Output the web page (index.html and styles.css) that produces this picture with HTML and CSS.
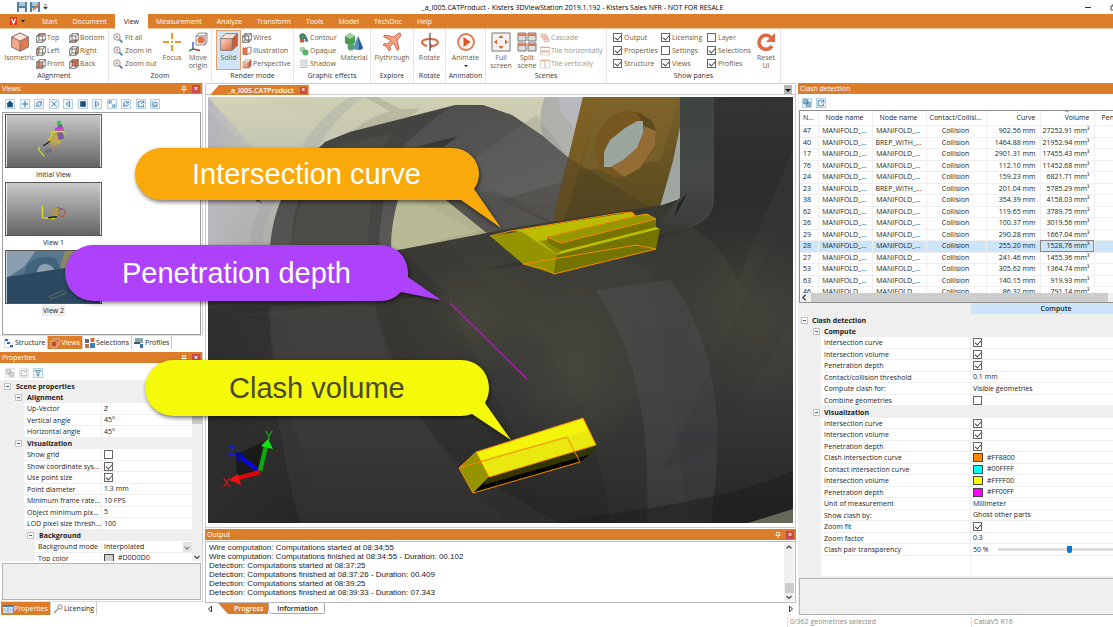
FILE: index.html
```html
<!DOCTYPE html>
<html lang="en">
<head>
<meta charset="utf-8">
<title>_a_I005.CATProduct - Kisters 3DViewStation</title>
<link rel="stylesheet" href="styles.css">
</head>
<body>
<svg class="defs" aria-hidden="true">
  <defs>
    <linearGradient id="gBox" x1="0" y1="0" x2="1" y2="1"><stop offset="0" stop-color="#fbd9cb"/><stop offset="1" stop-color="#e2673c"/></linearGradient>
    <linearGradient id="gThumb" x1="0" y1="0" x2="0" y2="1"><stop offset="0" stop-color="#c9c9c9"/><stop offset="1" stop-color="#646464"/></linearGradient>
    <symbol id="cube" viewBox="0 0 24 24"><path d="M12 1 22 6 12 11 2 6z" fill="#fbe0d4"/><path d="M2 6v12l10 5V11z" fill="#f5a788"/><path d="M22 6v12l-10 5V11z" fill="#e9784f"/><path d="M12 1 22 6v12l-10 5-10-5V6zM2 6l10 5 10-5M12 11v12" fill="none" stroke="#7c6a64" stroke-width="1.2"/></symbol>
    <symbol id="solid" viewBox="0 0 24 24"><path d="M2 8h14v14H2z" fill="url(#gBox)"/><path d="M2 8 8 2h14l-6 6z" fill="#fbe0d4"/><path d="M16 8l6-6v14l-6 6z" fill="#d9552a"/><path d="M2 8h14v14H2zM2 8l6-6h14v14l-6 6M16 8l6-6" fill="none" stroke="#7c6a64" stroke-width="1"/></symbol>
    <symbol id="wire" viewBox="0 0 10 10"><path d="M.7 3h6v6.300h-6zM.7 3 3 .7h6.300V7L6.700 9.300M6.700 3 9.300.7M3 .7V7h6.300M3 7 .7 9.300" fill="none" stroke="#555" stroke-width=".8"/></symbol>
    <symbol id="top" viewBox="0 0 10 10"><path d="M.7 3 3 .7h6.300L6.700 3z" fill="#f09a78"/><use href="#wire"/></symbol>
    <symbol id="bottom" viewBox="0 0 10 10"><path d="M.7 9.300 3 7h6.300L6.700 9.300z" fill="#f09a78"/><use href="#wire"/></symbol>
    <symbol id="left" viewBox="0 0 10 10"><path d="M.7 3 3 .7V7L.7 9.300z" fill="#f09a78"/><use href="#wire"/></symbol>
    <symbol id="right" viewBox="0 0 10 10"><path d="M6.700 3 9.300.7V7L6.700 9.300z" fill="#f09a78"/><use href="#wire"/></symbol>
    <symbol id="front" viewBox="0 0 10 10"><path d="M.7 3h6v6.300h-6z" fill="#f09a78"/><use href="#wire"/></symbol>
    <symbol id="back" viewBox="0 0 10 10"><path d="M3 .7h6.300V7H3z" fill="#ea7c54"/><use href="#wire"/></symbol>
    <symbol id="mag" viewBox="0 0 10 10"><path d="m6.300 6.300 3 3" stroke="#4a7fb0" stroke-width="1.800"/><circle cx="4" cy="4" r="3.200" fill="#eef2f5" stroke="#8b8f94" stroke-width=".9"/><circle cx="4" cy="4" r="1.300" fill="#eba27c"/></symbol>
    <symbol id="pin" viewBox="0 0 6 8"><path d="M1.500 1.500h3v3h-3zM.5 4.500h5M3 4.500v2.500" fill="none" stroke="#fff" stroke-width=".8"/></symbol>
    <symbol id="minus" viewBox="0 0 7 7"><path d="M.5.5h6v6h-6z" fill="#fff" stroke="#aaa" stroke-width=".7"/><path d="M2 3.500h3" stroke="#4a5a80"/></symbol>
    <symbol id="copy" viewBox="0 0 10 10"><path d="M1 1h5v5H1zM4 4h5v5H4z" fill="#a8cbe2" stroke="#2f6a94" stroke-width=".9"/></symbol>
    <symbol id="export" viewBox="0 0 10 10"><path d="M5 2H1.500v6.500H8V5.500M5 5l3-3M5.700 1.500H8.500v2.800" fill="none" stroke="#2f6a94" stroke-width="1"/></symbol>
    <symbol id="cycle" viewBox="0 0 10 10"><path d="M8 5a3 3 0 0 1-5.500 1.500M2 5a3 3 0 0 1 5.500-1.500M8 1.500v2.300H5.600M2 8.500V6.200h2.400" fill="none" stroke="#2f6a94" stroke-width="1"/></symbol>
  </defs>
</svg>

<header class="titlebar">
  <div class="quick">
    <svg viewBox="0 0 10 10"><path d="M0 0h10v10H0z" fill="#5b7f99"/><path d="M2 0h6v4H2z" fill="#a9c9de"/><path d="M2 6h6v4H2z" fill="#eaf1f5"/></svg>
    <svg viewBox="0 0 10 10"><path d="M0 0h10v10H0z" fill="#4f86a8"/><path d="M2 0h6v4H2z" fill="#a9c9de"/><path d="M2 6h6v4H2z" fill="#eaf1f5"/><path d="m3 8 6-6" stroke="#e07a3c" stroke-width="1.800"/></svg>
    <svg class="caret" viewBox="0 0 5 6"><path d="M1 .8h3M.6 3h3.800L2.500 5.300z" fill="#333" stroke="#333" stroke-width=".6"/></svg>
  </div>
  <h1>_a_I005.CATProduct - Kisters 3DViewStation 2019.1.192 - Kisters Sales NFR - NOT FOR RESALE</h1>
  <div class="winbtns"><button aria-label="Minimize"><svg viewBox="0 0 8 8"><path d="M1 4.500h6" stroke="#333"/></svg></button><button aria-label="Restore"><svg viewBox="0 0 8 8"><path d="M1 3h4.500v4H1zM3 3V1h4.500v4.500h-2" fill="none" stroke="#333" stroke-width=".9"/></svg></button></div>
</header>

<nav class="tabs">
  <button class="app" aria-label="Application menu"><svg viewBox="0 0 16 8"><path d="M0 0h7v8H0z" fill="#d9381e"/><path d="m1.500 1.500 2 5 2-5" fill="none" stroke="#fff" stroke-width="1.200"/><path d="M11 3h4l-2 2.500z" fill="#222"/></svg></button>
  <button>Start</button><button>Document</button><button class="on">View</button><button>Measurement</button><button>Analyze</button><button>Transform</button><button>Tools</button><button>Model</button><button>TechDoc</button><button>Help</button>
</nav>

<section class="ribbon">
  <div class="group g-align">
    <div class="body">
      <button class="big"><svg><use href="#cube"/></svg>Isometric</button>
      <div class="stack"><button><svg><use href="#top"/></svg>Top</button><button><svg><use href="#left"/></svg>Left</button><button><svg><use href="#front"/></svg>Front</button></div>
      <div class="stack"><button><svg><use href="#bottom"/></svg>Bottom</button><button><svg><use href="#right"/></svg>Right</button><button><svg><use href="#back"/></svg>Back</button></div>
    </div><h2>Alignment</h2>
  </div>
  <div class="group g-zoom">
    <div class="body">
      <div class="stack"><button><svg><use href="#mag"/></svg>Fit all</button><button><svg><use href="#mag"/></svg>Zoom in</button><button><svg><use href="#mag"/></svg>Zoom out</button></div>
      <button class="big"><svg viewBox="0 0 20 20"><path d="M10 1v6M10 13v6M1 10h6M13 10h6M9 10h2" stroke="#f4942c" stroke-width="2"/></svg>Focus</button>
      <button class="big"><svg viewBox="0 0 20 20"><path d="M8 4h9v9H8zM8 4l3-3h8v9l-2 3M17 4l2-3" fill="#f6f1ee" stroke="#777" stroke-width=".8"/><circle cx="13" cy="8" r="3.500" fill="#e4734a"/><path d="M5 17V10" stroke="#2b50c8" stroke-width="1.300"/><path d="m5 17-4 2" stroke="#2d9a3c" stroke-width="1.500"/><path d="m5 17 7 1.500" stroke="#cc2f25" stroke-width="1.500"/></svg>Move<br>origin</button>
    </div><h2>Zoom</h2>
  </div>
  <div class="group g-render">
    <div class="body">
      <button class="big sel"><svg><use href="#solid"/></svg>Solid</button>
      <div class="stack"><button><svg viewBox="0 0 10 10"><use href="#wire"/><path d="m.7 3 6 6.300M3 .7 6.700 3" stroke="#555" stroke-width=".7"/></svg>Wires</button><button><svg viewBox="0 0 10 10"><path d="M1 2h4v6.500H1z" fill="#e9784f"/><path d="M1 2h4v6.500H1zM5 2l2-1h2v6L5 8.500" fill="none" stroke="#b55432" stroke-width=".8"/></svg>Illustration</button><button><svg><use href="#solid"/></svg>Perspective</button></div>
    </div><h2>Render mode</h2>
  </div>
  <div class="group g-gfx">
    <div class="body">
      <div class="stack"><button><svg viewBox="0 0 10 10"><circle cx="3.500" cy="3.500" r="2.800" fill="#3f9a62" stroke="#222" stroke-width=".6"/><path d="M7 2 9.500 8.500h-4z" fill="#3b76b8"/><path d="M1 6h4v3.500H1z" fill="#d7572c"/></svg>Contour</button><button><svg viewBox="0 0 10 10"><circle cx="3.500" cy="3.500" r="2.800" fill="#9fd0a0"/><circle cx="6.500" cy="6.500" r="3" fill="#5fae6b"/></svg>Opaque</button><button><svg viewBox="0 0 10 10"><path d="M2 1h6v6H2z" fill="#e3e3e3" stroke="#bbb" stroke-width=".6"/><path d="M1 8.500h7l1.500-2" stroke="#bbb" fill="none"/></svg>Shadow</button></div>
      <button class="big"><svg viewBox="0 0 20 20"><path d="M1 4 6 1l5 3v7l-5 3-5-3z" fill="#4f9a55"/><path d="m1 4 5 3 5-3-5-3z" fill="#9fd39b"/><path d="m14 4 5 12c-2 2.500-8 2.500-10 0z" fill="#5a90c4"/><path d="m14 4 1 14c2 0 3-1 4-2z" fill="#2d5f96"/><circle cx="7" cy="15" r="3.500" fill="#57a06b"/></svg>Material</button>
    </div><h2>Graphic effects</h2>
  </div>
  <div class="group g-fly"><div class="body"><button class="big"><svg viewBox="0 0 20 20"><path d="M18.500 1.500c-1.400-1-3 0-4 1L12 5 3 3 1.500 4.500 9 8.500 5.500 12l-3-.500L1 13l4 2 2 4 1.500-1.500-.5-3L11.500 11l4 7.500L17 17l-2-9 2.500-2.500c1-1 2-2.700 1-4z" fill="#f2a182" stroke="#cf5a35" stroke-width=".9"/></svg>Flythrough</button></div><h2>Explore</h2></div>
  <div class="group g-rot"><div class="body"><button class="big"><svg viewBox="0 0 20 20"><path d="M7 14C-1 12 1 7 10 7s11 5 3 7" fill="none" stroke="#dd6540" stroke-width="2"/><path d="m10 11 4 3-4 3z" fill="#dd6540"/><path d="M10 1v18" stroke="#555" stroke-width="1.300"/></svg>Rotate</button></div><h2>Rotate</h2></div>
  <div class="group g-anim"><div class="body"><button class="big"><svg viewBox="0 0 20 20"><circle cx="10" cy="10" r="8" fill="#fdf4ef" stroke="#dd7a55" stroke-width="1.800"/><path d="m7.500 5 7 5-7 5z" fill="#dd5527"/></svg>Animate<i class="drop"></i></button></div><h2>Animation</h2></div>
  <div class="group g-scene">
    <div class="body">
      <button class="big"><svg viewBox="0 0 20 20"><path d="M1 1h18v18H1z" fill="#f5f2f1" stroke="#777"/><path d="m10 3 2.500 3h-5zM10 17l2.500-3h-5zM3 10l3-2.500v5zM17 10l-3-2.500v5z" fill="#d9602f"/></svg>Full<br>screen</button>
      <button class="big"><svg viewBox="0 0 20 20"><path d="M1 1h8v8H1zM11 1h8v8h-8zM1 11h8v8H1zM11 11h8v8h-8z" fill="#dfdcda" stroke="#777"/><path d="M1 3h8M11 3h8M1 13h8M11 13h8" stroke="#e07a55" stroke-width="2"/></svg>Split<br>scene</button>
      <div class="stack dim"><button><svg viewBox="0 0 10 10"><path d="M1 1h5v3H1zM2.500 3h5v3h-5zM4 5.500h5v3H4z" fill="#f3e3dd" stroke="#dcaea0" stroke-width=".8"/></svg>Cascade</button><button><svg viewBox="0 0 10 10"><path d="M.5 1h9v3.500h-9zM.5 5.500h9V9h-9z" fill="#fff" stroke="#d3bdb6" stroke-width=".7"/><path d="M.5 1.500h9M.5 6h9" stroke="#e9a58e"/></svg>Tile horizontally</button><button><svg viewBox="0 0 10 10"><path d="M.5 1H5v8H.5zM5 1h4.500v8H5z" fill="#fff" stroke="#d3bdb6" stroke-width=".7"/><path d="M.5 1.500h9" stroke="#e9a58e"/></svg>Tile vertically</button></div>
    </div><h2>Scenes</h2>
  </div>
  <div class="group g-panes">
    <div class="body">
      <div class="stack"><label><input type="checkbox" checked>Output</label><label><input type="checkbox" checked>Properties</label><label><input type="checkbox" checked>Structure</label></div>
      <div class="stack"><label><input type="checkbox" checked>Licensing</label><label><input type="checkbox">Settings</label><label><input type="checkbox" checked>Views</label></div>
      <div class="stack"><label><input type="checkbox">Layer</label><label><input type="checkbox" checked>Selections</label><label><input type="checkbox" checked>Profiles</label></div>
      <button class="big"><svg viewBox="0 0 20 20"><path d="M15.500 6A7 7 0 1 0 16 14" fill="none" stroke="#dd6a45" stroke-width="3.500"/><path d="M19 1v9h-9z" fill="#dd6a45"/></svg>Reset<br>UI</button>
    </div><h2>Show panes</h2>
  </div>
</section>

<main class="work">
  <aside class="side">
    <section class="pane views">
      <header class="bar"><h3>Views</h3><button aria-label="Pin"><svg><use href="#pin"/></svg></button><button class="close" aria-label="Close">×</button></header>
      <div class="tools spread">
        <button aria-label="Home"><svg viewBox="0 0 10 10"><path d="M5 .5 9.500 5H8.500v4h-7V5h-1z" fill="#1d4f7c"/></svg></button>
        <button aria-label="Add"><svg viewBox="0 0 10 10"><path d="M5 1v8M1 5h8" stroke="#2f6a94" stroke-width="1.200"/></svg></button>
        <button aria-label="Refresh"><svg><use href="#cycle"/></svg></button>
        <button aria-label="Delete"><svg viewBox="0 0 10 10"><path d="m1.500 1.500 7 7M8.500 1.500l-7 7" stroke="#2f6a94"/></svg></button>
        <button aria-label="Previous"><svg viewBox="0 0 10 10"><path d="M7 1.500v7L2.500 5z" fill="none" stroke="#2f6a94"/></svg></button>
        <button aria-label="Stop"><svg viewBox="0 0 10 10"><path d="M1.500 1.500h7v7h-7z" fill="#1d4f7c"/></svg></button>
        <button aria-label="Next"><svg viewBox="0 0 10 10"><path d="M3 1.500v7L7.500 5z" fill="none" stroke="#2f6a94"/></svg></button>
        <button aria-label="Fit"><svg viewBox="0 0 10 10"><path d="M1.500 5V1.500H5M8.500 5v3.500H5M2 2l2.500 2.500M8 8 5.500 5.500" fill="none" stroke="#2f6a94"/></svg></button>
        <button aria-label="Update"><svg><use href="#cycle"/></svg></button>
        <button aria-label="Export"><svg><use href="#export"/></svg></button>
        <button aria-label="Settings"><svg viewBox="0 0 10 10"><circle cx="5.500" cy="5" r="2.300" fill="none" stroke="#2f6a94"/><path d="M1.500 1.500v7h7" fill="none" stroke="#2f6a94" stroke-width=".8"/></svg></button>
      </div>
      <div class="list">
        <figure><svg viewBox="0 0 97 54"><path d="M0 0h97v54H0z" fill="url(#gThumb)"/><path d="M43 27l6-10 7-1 4 5-5 9-8 2z" fill="#b9a94e"/><path d="M53 9h4l2 6v10l-5 1-2-8z" fill="#7c5aa0"/><path d="M50 13h8v3h-8z" fill="#d53bd8"/><path d="M52 6h4v4h-4z" fill="#2fc95a"/><path d="M45 18l13-1 2 3" fill="none" stroke="#d8d820" stroke-width="1.500"/><path d="M34 33l-1 3 6 7M47 20l-4 7" fill="none" stroke="#d8d820" stroke-width="1.200"/><path d="M38 32l7-5" stroke="#2a2a30" stroke-width="1.500"/><path d="M39 37l6-3 2 4-5 2z" fill="#6d6f80"/><path d="M47 28l3 6-3 4" fill="none" stroke="#c77a6a"/></svg><figcaption>Initial View</figcaption></figure>
        <figure><svg viewBox="0 0 97 54"><path d="M0 0h97v54H0z" fill="url(#gThumb)"/><path d="M37 24v12l13 1" fill="none" stroke="#dcdc20" stroke-width="1.500"/><circle cx="51" cy="30" r="5" fill="#a89a55"/><path d="M43 36l9-1" stroke="#222" stroke-width="1.500"/><path d="M55 27l6 1-2 7-5-1z" fill="none" stroke="#b5543c"/><path d="M52 25l6 2" stroke="#7b4b9e"/></svg><figcaption>View 1</figcaption></figure>
        <figure class="picked"><svg viewBox="0 0 97 54"><path d="M0 0h97v54H0z" fill="#57778f"/><path d="M0 0h30L18 16 0 28z" fill="#8aa0b0"/><path d="M57 0h40v16L70 12z" fill="#60758a"/><path d="M19 20C22 8 38 4 50 7l8 14H47C45 9 31 12 31 24H18z" fill="#41647d"/><path d="M31 23C32 12 44 10 50 20z" fill="#8da1ac"/><path d="M60 0h12L65 22l-10-2z" fill="#8b8a62"/><path d="M0 27 70 16l27 8v30H0z" fill="#2b4a62"/><path d="M44 47l15-6 2 3-15 6z" fill="none" stroke="#7b755a" stroke-width=".7"/></svg><figcaption>View 2</figcaption></figure>
      </div>
    </section>
    <div class="docktabs">
      <button><svg viewBox="0 0 10 10"><path d="M1 1h3v2H1zM3 4h3v2H3zM6 7h3v2H6z" fill="#2f6ab0"/><path d="M.3.3v9.400h9.400" fill="none" stroke="#9bb" stroke-width=".6"/></svg>Structure</button><button class="on"><svg viewBox="0 0 10 10"><path d="M1 3h6v6H1zM3 1h6v6" fill="#c74f28" stroke="#fff" stroke-width=".6"/></svg>Views</button><button><svg viewBox="0 0 10 10"><path d="M0 1h4v4H0z" fill="#5a6a7a"/><path d="M5.500 0h4v4h-4zM0 6h4v4H0z" fill="#dd6a3c"/><path d="M5 5h5v5H5z" fill="#2e86c8"/></svg>Selections</button><button><svg viewBox="0 0 10 10"><path d="M1 0h8v5H1z" fill="#8aa"/><path d="M0 4h6v2H0z" fill="#456"/><path d="M6 6h3v4H6z" fill="#37b"/></svg>Profiles</button>
    </div>
    <section class="pane props">
      <header class="bar"><h3>Properties</h3><button aria-label="Pin"><svg><use href="#pin"/></svg></button><button class="close" aria-label="Close">×</button></header>
      <div class="tools"><button class="off" aria-label="Copy"><svg><use href="#copy"/></svg></button><button class="off" aria-label="Export"><svg><use href="#export"/></svg></button><button aria-label="Filter"><svg viewBox="0 0 10 10"><path d="M1.500 2h7L6 5v3.500H4V5z" fill="#d6ebf7" stroke="#2f6a94" stroke-width=".9"/></svg></button></div>
      <div class="scroller">
        <div class="sheet">
          <div class="sec s1"><button aria-label="Collapse"><svg><use href="#minus"/></svg></button>Scene properties</div>
          <div class="sec s2"><button aria-label="Collapse"><svg><use href="#minus"/></svg></button>Alignment</div>
          <div class="row"><span class="k">Up-Vector</span><span class="v">Z</span></div>
          <div class="row"><span class="k">Vertical angle</span><span class="v">45°</span></div>
          <div class="row"><span class="k">Horizontal angle</span><span class="v">45°</span></div>
          <div class="sec s2"><button aria-label="Collapse"><svg><use href="#minus"/></svg></button>Visualization</div>
          <div class="row"><label class="k" for="p1">Show grid</label><span class="v"><input type="checkbox" id="p1"></span></div>
          <div class="row"><label class="k" for="p2">Show coordinate sys...</label><span class="v"><input type="checkbox" id="p2" checked></span></div>
          <div class="row"><label class="k" for="p3">Use point size</label><span class="v"><input type="checkbox" id="p3" checked></span></div>
          <div class="row"><span class="k">Point diameter</span><span class="v">1.3 mm</span></div>
          <div class="row"><span class="k">Minimum frame rate...</span><span class="v">10 FPS</span></div>
          <div class="row"><span class="k">Object minimum pix...</span><span class="v">5</span></div>
          <div class="row"><span class="k">LOD pixel size thresh...</span><span class="v">100</span></div>
          <div class="sec s3"><button aria-label="Collapse"><svg><use href="#minus"/></svg></button>Background</div>
          <div class="row deep"><label class="k" for="bm">Background mode</label><span class="v"><select id="bm"><option>Interpolated</option></select></span></div>
          <div class="row deep"><span class="k">Top color</span><span class="v"><i class="chip grey"></i>#D0D0D0</span></div>
        </div>
        <div class="vbar"><span></span><svg viewBox="0 0 8 8"><path d="m1.500 3 2.500 2.500L6.500 3" fill="none" stroke="#444" stroke-width="1.200"/></svg></div>
      </div>
      <div class="note"></div>
    </section>
    <div class="docktabs low">
      <button class="on"><svg viewBox="0 0 10 10"><path d="M0 1h10v8H0z" fill="#dceaf6"/><path d="M0 1h10v2H0z" fill="#3e7cc0"/><path d="M5 3v6M0 5h10M0 7h10" stroke="#7aa6d4" stroke-width=".7"/></svg>Properties</button><button><svg viewBox="0 0 10 10"><path d="M1 9 6 4" stroke="#999" stroke-width="1.500"/><circle cx="7" cy="3" r="2.200" fill="#eee" stroke="#888" stroke-width=".9"/></svg>Licensing</button>
    </div>
  </aside>

  <section class="center">
    <div class="doctabs"><button class="doc">_a_I005.CATProduct<span class="x">×</span></button><button class="more" aria-label="Documents"><svg viewBox="0 0 8 8"><path d="M1 3h6L4 6z" fill="#111"/></svg></button></div>
    <div class="viewport">
      <svg class="scene" viewBox="208 97 585 426" preserveAspectRatio="xMidYMid slice" role="img" aria-label="3D model with clash geometry">
        <defs>
          <linearGradient id="sky" x1="0" y1="0" x2="0" y2="1"><stop offset="0" stop-color="#d0d1b2"/><stop offset=".2" stop-color="#b9b9ae"/><stop offset=".45" stop-color="#929290"/></linearGradient>
          <linearGradient id="lilac" x1="0" y1="0" x2="1" y2="0"><stop offset="0" stop-color="#b4b4ba"/><stop offset="1" stop-color="#b4b4ba" stop-opacity="0"/></linearGradient>
          <linearGradient id="ring" x1="0" y1="0" x2="1" y2="1"><stop offset="0" stop-color="#484846"/><stop offset="1" stop-color="#686765"/></linearGradient>
          <linearGradient id="body" gradientUnits="userSpaceOnUse" x1="0" y1="200" x2="0" y2="523"><stop offset="0" stop-color="#383833"/><stop offset=".3" stop-color="#3c3c37"/><stop offset=".6" stop-color="#383837"/><stop offset="1" stop-color="#262626"/></linearGradient>
          <linearGradient id="wall" gradientUnits="userSpaceOnUse" x1="0" y1="97" x2="0" y2="330"><stop offset="0" stop-color="#333"/><stop offset=".4" stop-color="#2c2c2c"/><stop offset="1" stop-color="#2c2c2c" stop-opacity="0"/></linearGradient>
          <linearGradient id="strip" gradientUnits="userSpaceOnUse" x1="0" y1="97" x2="0" y2="235"><stop offset="0" stop-color="#3e443f"/><stop offset=".6" stop-color="#454846"/><stop offset="1" stop-color="#3a3a38"/></linearGradient>
          <linearGradient id="brass" x1="0" y1="0" x2="0" y2="1"><stop offset="0" stop-color="#796026"/><stop offset="1" stop-color="#55481f"/></linearGradient>
          <radialGradient id="olive"><stop offset="0" stop-color="#505040" stop-opacity=".5"/><stop offset="1" stop-color="#505040" stop-opacity="0"/></radialGradient>
          <linearGradient id="shade" x1="0" y1="0" x2="1" y2="0"><stop offset="0" stop-color="#303030" stop-opacity=".8"/><stop offset="1" stop-color="#303030" stop-opacity="0"/></linearGradient>
        </defs>
        <path d="M208 97h585v426H208z" fill="url(#sky)"/>
        <path d="M208 97l80 90v60h-80z" fill="url(#lilac)"/>
        <path d="M208 97h50l95 45-80 100h-65v-40l70-30-70-60z" fill="#fff" opacity=".06"/>
        <path d="M302 145c15-22 32-38 48-48h14c-20 14-36 32-48 54zM250 244c4-30 14-50 24-64l10 8c-12 18-20 34-22 56z" fill="#9c9ca4" opacity=".28"/>
        <path d="M378 97l44 25-8 2-50-27zM360 125c20-14 44-18 60-16l-10 8-60 16z" fill="#a5a592" opacity=".5"/>
        <path d="M545 97h38l-15 60-25-22c-4-14-3-28 2-38z" fill="#b0b0ac"/>
        <path d="M558 97h25l-8 32-14-16z" fill="#b8b8bf"/>
        <path d="M270 246c2-20 6-34 11-46l20-36 24-22 25-10 105-27h28l29 10 31 21 27 23 40 32 80 30v60H270z" fill="url(#ring)"/>
        <path d="M325 142l25-10 105-26c-20 8-38 28-48 36-16 20-26 60-28 104h-88c2-30 8-60 34-104z" fill="#3e3e3c" opacity=".7"/>
        <path d="M292 246c2-30 12-64 40-100l60-12c-20 30-22 70-24 112z" fill="#57574d" opacity=".45"/>
        <path d="M416 147l42-11-14 11z" fill="#383836"/>
        <path d="M391 254c0-20 2-36 7-54h48l41 33-40 12-50 12z" fill="#b1b28e"/>
        <path d="M391 246c0-18 3-30 7-46h18l68 35-88 17z" fill="#bec09a" opacity=".55"/>
        <path d="M446 200l50-10 60 34-69 9z" fill="#50504e" opacity=".75"/>
        <path d="M466 165l70-50 34 44 30 26-60 20-60-15z" fill="#77767a" opacity=".2"/>
        <path d="M500 200l90-26 50 36-90 14z" fill="#45433d" opacity=".4"/>
        <path d="M660 97h24l-4 100-24 10z" fill="#9fa6a2"/>
        <path d="M583 97h103l-13 64-17 60-104 4z" fill="url(#brass)"/>
        <path d="M583 97h18l-38 128h-11z" fill="#856425" opacity=".55"/>
        <path d="M601 97h79l-20 64-80 10z" fill="#83672f" opacity=".5"/>
        <path d="M568 157l84 52 4 16H552z" fill="#483d24" opacity=".4"/>
        <path d="M594 148l4-16 12-15 16-7 15 3 12 9 3 14-6 19-16 17-18 6-16-9z" fill="#76571f"/>
        <path d="M611 167l12-7 14-12 6-15 1-12 12 9-1 15-15 23-16 9z" fill="#946c35"/>
        <path d="M637 112l15 9 4 10-12-5-4-8z" fill="#5c491f"/>
        <path d="M643 121h-6l-12 7-15 12-6 12v15h7l12-7 14-12 6-15z" fill="#9ba69d"/>
        <path d="M208 316l190-66 114-22 150-23 20-7 111-30v355H208z" fill="url(#body)"/>
        <path d="M713 97h80v250h-40c-8-60-24-100-62-120 16-4 22-14 22-26z" fill="url(#wall)"/>
        <path d="M680 97h34v104c-2 16-12 22-24 26l-30-4 20-26z" fill="url(#strip)"/>
        <path d="M713 110v90c0 12-8 20-22 26" fill="none" stroke="#4a4c4a" stroke-width=".8"/>
        <path d="M793 150v200l-60-60z" fill="#434341" opacity=".3"/>
        <path d="M208 260l200-5 40 40-240 22z" fill="#353532"/>
        <path d="M208 316h90v207h-90z" fill="url(#shade)"/>
        <path d="M440 240l90-20 120 50 40 253h-80c-10-110-60-190-170-283z" fill="#58584a" opacity=".1"/>
        <ellipse cx="475" cy="320" rx="80" ry="60" fill="url(#olive)"/>
        <ellipse cx="575" cy="365" rx="70" ry="90" fill="url(#olive)"/>
        <ellipse cx="755" cy="320" rx="70" ry="90" fill="url(#olive)"/>
        <path d="M595 290l76-10c26 36 40 80 44 120 6 44 0 90-4 123h-64c4-110-14-180-52-233z" fill="#5a5a60" opacity=".3"/>
        <path d="M208 308l60-1c4 40 12 90 30 130l30 86H208z" fill="#282828" opacity=".35"/>
        <path d="M270 306l104-6c10 56 34 120 94 170l90 53H300c-20-70-30-150-30-217z" fill="#555554" opacity=".2"/>
        <path d="M374 300l76 2c24 60 70 130 100 221h-40c-60-50-112-130-136-223z" fill="#1f1f22" opacity=".15"/>
        <path d="M688 192l-14 26 4-14z" fill="#1e211e"/>
        <path d="M480 270l80-18 120-22v4l-120 28-80 8z" fill="#2b2b28" opacity=".35"/>
        <path d="M560 523c80-16 160-20 233-52v38l-45 14z" fill="#1c1c1c" opacity=".5"/>
        <path d="M748 523l45-14v14z" fill="#686858"/>
        <path d="M793 200v120l-80 130-50 20 90-190z" fill="#2c2c2e" opacity=".15"/>
        <g stroke-linejoin="round">
          <path d="M490 236l33-5 34 24-3 19-31-10z" fill="#949400"/>
          <path d="M511 231l121-19 3 4 12-2 9 5v8l4 2-103 26-35-23z" fill="#bcbc00"/>
          <path d="M557 255l103-26-4 20-102 25z" fill="#747400"/>
          <path d="M539 241l8-1 14 11-4 3z" fill="#8a8a00"/>
          <path d="M547 237l100-23 9 5v8l-95 24-14-9z" fill="#757500"/>
          <path d="M547 237l100-23 9 5-95 24z" fill="#969600"/>
          <path d="M490 236l21-5 109-18 12-1 3 3M561 243l-14-6 88-21 12-2 9 5-95 24zM523 264l22 5 9 5 102-25-20-4-113 19" fill="none" stroke="#f58a00"/>
          <path d="M459 468l17-16 13 25-3 6-13 10z" fill="#949400"/>
          <path d="M489 477l107-32-6 9-10 8-107 31z" fill="#050500"/>
          <path d="M489 477l107-32-5 9-108 31z" fill="#353500"/>
          <path d="M476 452l107-34 13 27-107 32z" fill="#f5f50c"/>
          <path d="M483 459l106-29 7 15-107 32z" fill="#e9e910"/>
          <path d="M476 452l107-34 13 27-107 32zM476 452l-17 16 14 25 107-31-13-25-108 31" fill="none" stroke="#f58a00"/>
          <path d="M450 303l77 76" stroke="#c812c8" stroke-width="1.200"/>
        </g>
        <path d="M236 455l31-15-7 32-23 7z" fill="#151515" opacity=".8"/>
        <path d="M260 472l-20-15" stroke="#0a0ad8" stroke-width="4.500"/><path d="M235 452l9 1-7 10z" fill="#0a0a8c"/>
        <path d="M260 471l6-25" stroke="#0ba80b" stroke-width="4.500"/><path d="M268 439l5 10-12-3z" fill="#0be60b"/>
        <path d="M260 472l-22 6" stroke="#d10a0a" stroke-width="4.500"/><path d="M229 480l9-6 3 11z" fill="#f01010"/>
        <g class="axis"><text x="222" y="487" fill="#d81414">X</text><text x="228" y="455" fill="#2020d0">Z</text><text x="265" y="440" fill="#18b018">Y</text></g>
        <path d="M257 194v8l2-2 2 3" fill="none" stroke="#111" stroke-width=".8"/>
      </svg>
    </div>
    <section class="pane output">
      <header class="bar"><h3>Output</h3><button aria-label="Pin"><svg><use href="#pin"/></svg></button><button class="close" aria-label="Close">×</button></header>
      <div class="log"><ul><li>Wire computation: Computations started at 08:34:55</li><li>Wire computation: Computations finished at 08:34:55 - Duration: 00.102</li><li>Detection: Computations started at 08:37:25</li><li>Detection: Computations finished at 08:37:26 - Duration: 00.409</li><li>Detection: Computations started at 08:39:25</li><li>Detection: Computations finished at 08:39:33 - Duration: 07.343</li></ul>
        <div class="vbar"><svg viewBox="0 0 8 8"><path d="m1.500 5.500 2.500-2.500 2.500 2.500" fill="none" stroke="#444" stroke-width="1.200"/></svg><span></span><svg viewBox="0 0 8 8"><path d="m1.500 3 2.500 2.500L6.500 3" fill="none" stroke="#444" stroke-width="1.200"/></svg></div></div>
      <div class="outtabs"><button class="arr" aria-label="Scroll left"><svg viewBox="0 0 8 8"><path d="M5.500 1v6L2.500 4z" fill="none" stroke="#222" stroke-width=".9"/></svg></button><button class="on">Progress</button><button class="info">Information</button><button class="arr end" aria-label="Scroll right"><svg viewBox="0 0 8 8"><path d="M2.500 1v6l3-3z" fill="none" stroke="#222" stroke-width=".9"/></svg></button></div>
    </section>
  </section>

  <aside class="clash">
    <header class="bar"><h3>Clash detection</h3></header>
    <div class="tools"><button aria-label="Copy"><svg><use href="#copy"/></svg></button><button aria-label="Export"><svg><use href="#export"/></svg></button></div>
    <div class="grid">
      <div class="clip">
      <table>
        <colgroup><col class="c0"><col class="c1"><col class="c1"><col class="c3"><col class="c4"><col class="c4"><col class="c4"></colgroup>
        <thead><tr><th>N...</th><th>Node name</th><th>Node name</th><th>Contact/Collisi...</th><th>Curve</th><th class="sorted">Volume</th><th>Penetration</th></tr></thead>
        <tbody>
          <tr><td>47</td><td>MANIFOLD_...</td><td>MANIFOLD_...</td><td>Collision</td><td>902.56 mm</td><td>27252.91 mm³</td><td></td></tr>
          <tr><td>40</td><td>MANIFOLD_...</td><td>BREP_WITH_...</td><td>Collision</td><td>1464.88 mm</td><td>21952.94 mm³</td><td></td></tr>
          <tr><td>17</td><td>MANIFOLD_...</td><td>MANIFOLD_...</td><td>Collision</td><td>2901.31 mm</td><td>17455.43 mm³</td><td></td></tr>
          <tr><td>76</td><td>MANIFOLD_...</td><td>MANIFOLD_...</td><td>Collision</td><td>112.10 mm</td><td>11452.68 mm³</td><td></td></tr>
          <tr><td>24</td><td>MANIFOLD_...</td><td>MANIFOLD_...</td><td>Collision</td><td>159.23 mm</td><td>6821.71 mm³</td><td></td></tr>
          <tr><td>23</td><td>MANIFOLD_...</td><td>BREP_WITH_...</td><td>Collision</td><td>201.04 mm</td><td>5785.29 mm³</td><td></td></tr>
          <tr><td>38</td><td>MANIFOLD_...</td><td>MANIFOLD_...</td><td>Collision</td><td>354.39 mm</td><td>4158.03 mm³</td><td></td></tr>
          <tr><td>62</td><td>MANIFOLD_...</td><td>MANIFOLD_...</td><td>Collision</td><td>119.65 mm</td><td>3789.75 mm³</td><td></td></tr>
          <tr><td>26</td><td>MANIFOLD_...</td><td>MANIFOLD_...</td><td>Collision</td><td>100.37 mm</td><td>3019.56 mm³</td><td></td></tr>
          <tr><td>29</td><td>MANIFOLD_...</td><td>MANIFOLD_...</td><td>Collision</td><td>290.28 mm</td><td>1667.04 mm³</td><td></td></tr>
          <tr class="sel"><td>28</td><td>MANIFOLD_...</td><td>MANIFOLD_...</td><td>Collision</td><td>255.20 mm</td><td class="focus">1528.76 mm³</td><td></td></tr>
          <tr><td>27</td><td>MANIFOLD_...</td><td>MANIFOLD_...</td><td>Collision</td><td>241.46 mm</td><td>1455.36 mm³</td><td></td></tr>
          <tr><td>53</td><td>MANIFOLD_...</td><td>MANIFOLD_...</td><td>Collision</td><td>305.62 mm</td><td>1364.74 mm³</td><td></td></tr>
          <tr><td>63</td><td>MANIFOLD_...</td><td>MANIFOLD_...</td><td>Collision</td><td>140.15 mm</td><td>919.93 mm³</td><td></td></tr>
          <tr><td>46</td><td>MANIFOLD_...</td><td>MANIFOLD_...</td><td>Collision</td><td>86.32 mm</td><td>791.14 mm³</td><td></td></tr>
        </tbody>
      </table>
      </div>
      <div class="hbar"><svg viewBox="0 0 8 8"><path d="M5 1.500 2.500 4 5 6.500" fill="none" stroke="#444" stroke-width="1.200"/></svg><span></span></div>
    </div>
    <div class="run"><button>Compute</button></div>
    <div class="sheet wide">
      <div class="sec s1"><button aria-label="Collapse"><svg><use href="#minus"/></svg></button>Clash detection</div>
      <div class="sec s2"><button aria-label="Collapse"><svg><use href="#minus"/></svg></button>Compute</div>
      <div class="row"><label class="k" for="c1">Intersection curve</label><span class="v"><input type="checkbox" id="c1" checked></span></div>
      <div class="row"><label class="k" for="c2">Intersection volume</label><span class="v"><input type="checkbox" id="c2" checked></span></div>
      <div class="row"><label class="k" for="c3">Penetration depth</label><span class="v"><input type="checkbox" id="c3" checked></span></div>
      <div class="row"><span class="k">Contact/collision threshold</span><span class="v">0.1 mm</span></div>
      <div class="row"><span class="k">Compute clash for:</span><span class="v">Visible geometries</span></div>
      <div class="row"><label class="k" for="c4">Combine geometries</label><span class="v"><input type="checkbox" id="c4"></span></div>
      <div class="sec s2"><button aria-label="Collapse"><svg><use href="#minus"/></svg></button>Visualization</div>
      <div class="row"><label class="k" for="c5">Intersection curve</label><span class="v"><input type="checkbox" id="c5" checked></span></div>
      <div class="row"><label class="k" for="c6">Intersection volume</label><span class="v"><input type="checkbox" id="c6" checked></span></div>
      <div class="row"><label class="k" for="c7">Penetration depth</label><span class="v"><input type="checkbox" id="c7" checked></span></div>
      <div class="row"><span class="k">Clash intersection curve</span><span class="v"><i class="chip orange"></i>#FF8800</span></div>
      <div class="row"><span class="k">Contact intersection curve</span><span class="v"><i class="chip cyan"></i>#00FFFF</span></div>
      <div class="row"><span class="k">Intersection volume</span><span class="v"><i class="chip yellow"></i>#FFFF00</span></div>
      <div class="row"><span class="k">Penetration depth</span><span class="v"><i class="chip magenta"></i>#FF00FF</span></div>
      <div class="row"><span class="k">Unit of measurement</span><span class="v">Millimeter</span></div>
      <div class="row"><span class="k">Show clash by:</span><span class="v">Ghost other parts</span></div>
      <div class="row"><label class="k" for="c8">Zoom fit</label><span class="v"><input type="checkbox" id="c8" checked></span></div>
      <div class="row"><span class="k">Zoom factor</span><span class="v">0.3</span></div>
      <div class="row"><label class="k" for="c9">Clash pair transparency</label><span class="v slide">50 %<input type="range" id="c9" min="0" max="100" value="50"></span></div>
      <div class="rest"><span></span></div>
    </div>
    <div class="note"></div>
  </aside>

  <div class="callout one"><svg viewBox="0 0 370 86"><path d="M26 0H317C332 0 344 12 344 26Q344 34 339 41L366 80 326 52H26A26 26 0 0 1 26 0z" fill="#f9aa0a"/></svg><p>Intersection curve</p></div>
  <div class="callout two"><svg viewBox="0 0 380 62"><path d="M28 0H315C331 0 343 12 343 28V32L376 55 336 47Q328 56 315 56H28A28 28 0 0 1 28 0z" fill="#ae42fb"/></svg><p>Penetration depth</p></div>
  <div class="callout three"><svg viewBox="0 0 370 86"><path d="M28 0H316C332 0 344 12 344 28Q344 36 340 43L366 80 327 54Q322 56 316 56H28A28 28 0 0 1 28 0z" fill="#f5f90a"/></svg><p>Clash volume</p></div>
</main>

<footer class="status"><span class="s-sel">0/362 geometries selected</span><span class="s-fmt">CatiaV5 R16</span></footer>
</body>
</html>
```

FILE: styles.css
```css
* { box-sizing: border-box; }
body { margin: 0; min-height: 100vh; display: flex; flex-direction: column; background: #fff; color: #1c1c1c; font: 7px/11px "Open Sans", "Noto Sans", sans-serif; overflow: hidden; }
h1, h2, h3, p, ul, figure { margin: 0; padding: 0; font-size: inherit; font-weight: 400; }
button { border: 0; padding: 0; background: none; font: inherit; color: inherit; display: flex; align-items: center; white-space: nowrap; }
svg { display: block; flex: none; }
.defs { position: absolute; width: 0; height: 0; }

input[type=checkbox] { appearance: none; flex: none; width: 9px; height: 9px; margin: 0; border: 1px solid #666; background: #fff; display: grid; place-items: center; }
input[type=checkbox]:checked::after { content: ""; width: 5px; height: 3px; margin-bottom: 1px; border: solid #444; border-width: 0 0 1px 1px; transform: rotate(-48deg); }

/* window frame */
.titlebar { height: 14px; display: grid; grid-template-columns: 1fr auto 1fr; align-items: center; }
.titlebar h1 { color: #000; font-weight: 500; line-height: 13px; padding-left: 32px; }
.quick { display: flex; gap: 3px; padding-left: 17px; align-items: center; }
.quick svg { width: 10px; height: 10px; }
.quick .caret { width: 5px; height: 6px; }
.winbtns { display: flex; justify-content: flex-end; gap: 18px; margin-right: -5px; }
.winbtns svg { width: 8px; height: 8px; }

.tabs { height: 15px; display: flex; gap: 1px; background: #dc7d2a; border-bottom: 1px solid #f3c79f; color: #fff; }
.tabs button { padding: 0 7px; }
.tabs .app { padding: 0 8px 0 10px; }
.tabs .app svg { width: 16px; height: 8px; }
.tabs .on { background: #fff; color: #222; height: 15px; padding: 0 9px; }

.ribbon { display: flex; height: 53px; color: #6e5a3a; }
.group { display: flex; flex-direction: column; border-right: 1px solid #e6e6e6; }
.group h2 { text-align: center; color: #333; line-height: 10px; margin-bottom: 1px; }
.body { flex: 1; display: flex; padding-top: 1px; }
.g-align { width: 109px; } .g-zoom { width: 103px; } .g-render { width: 82px; } .g-gfx { width: 77px; }
.g-fly { width: 43px; } .g-rot { width: 32px; } .g-anim { width: 40px; } .g-scene { width: 121px; } .g-panes { width: 174px; }
.big { flex-direction: column; justify-content: flex-start; line-height: 8px; width: 26px; padding-top: 2px; text-align: center; }
.big svg { width: 20px; height: 20px; margin-bottom: 2px; }
.g-align .big { width: 35px; padding-left: 4px; }
.g-fly .big, .g-rot .big, .g-anim .big { width: 100%; }
.g-gfx .big { width: 30px; }
.sel.big { width: 25px; background: #cfe5f6; border: 1px solid #e0a070; padding-top: 1px; height: 40px; }
.drop { border: 2px solid transparent; border-top-color: #222; margin-top: 3px; }
.stack { display: flex; flex-direction: column; padding-top: 1px; }
.stack button, .stack label { height: 13px; display: flex; align-items: center; gap: 1px; white-space: nowrap; }
.stack svg { width: 10px; height: 10px; }
.stack label { gap: 2px; }
.g-align .stack { width: 32px; margin-left: 1px; }
.g-zoom .body { padding-left: 4px; } .g-zoom .stack { width: 46px; } .g-zoom .stack button { gap: 2px; }
.g-render .body { padding-left: 4px; gap: 1px; }
.g-gfx .body { padding-left: 5px; } .g-gfx .stack { width: 40px; }
.g-scene .body { padding-left: 2px; }
.dim { color: #9b948c; }
.g-panes .body { padding-left: 6px; } .g-panes .stack { width: 48px; }
.g-panes .stack + .stack { width: 46px; }

/* working area */
.work { position: relative; flex: 1; display: grid; grid-template-columns: 203px minmax(0, 1fr) 315px; column-gap: 2px; padding-top: 1px; }
.bar { height: 11px; flex: none; display: flex; align-items: center; gap: 5px; padding: 0 2px; background: #dc7d2a; color: #fff; line-height: 11px; }
.bar h3 { flex: 1; }
.bar svg { width: 6px; height: 8px; }
.close { width: 8px; height: 8px; justify-content: center; background: #c94a4a; color: #fff; font-weight: 700; line-height: 8px; }
.side, .center, .clash { display: flex; flex-direction: column; min-height: 0; min-width: 0; }
.pane { display: flex; flex-direction: column; }
.tools { display: flex; gap: 4px; padding: 5px 5px 3px; }
.tools.spread { width: 165px; justify-content: space-between; gap: 0; }
.tools button { width: 10px; height: 10px; background: #f0f7fc; border: 1px solid #b5d2e4; }
.tools button svg { width: 8px; height: 8px; }
.tools .off { filter: grayscale(1); opacity: .55; }
.views { height: 252px; border-right: 1px solid #d4d4d4; }
.list { flex: 1; border: 1px solid #a0a0a0; margin: 0 1px 0 2px; padding: 1px 2px; }
.list figure { width: 97px; height: 68px; text-align: center; }
.list figure svg { width: 97px; height: 54px; border: 1px solid #555; }
.list figcaption { line-height: 13px; }
.picked figcaption { width: 23px; margin: 1px auto; line-height: 11px; background: #eee; }
.docktabs { display: flex; height: 14px; padding-left: 2px; border-top: 1px solid #ddd; }
.docktabs button { gap: 1px; padding: 0 2px; border-right: 1px solid #ccc; }
.docktabs svg { width: 10px; height: 10px; }
.docktabs .on { background: #dc7d2a; color: #fff; }
.props { margin-top: 3px; flex: 1; min-height: 0; background: #fff; border-right: 1px solid #d4d4d4; }
.props .tools { padding-bottom: 2px; }
.scroller { flex: 1; min-height: 0; overflow: hidden; display: flex; contain: size; }
.vbar { display: flex; flex-direction: column; align-items: center; justify-content: flex-end; width: 10px; background: #f0f0f0; }
.vbar svg { width: 8px; height: 8px; }
.scroller .vbar { justify-content: space-between; }
.scroller .vbar span { width: 10px; height: 44px; background: #cdcdcd; }
.note { flex: none; height: 37px; margin: 2px 1px 1px 2px; background: #efefef; border: 1px solid #b4b4b4; }
.low { margin-bottom: 12px; padding-left: 1px; }

/* property sheets */
.sheet { flex: 1; background: #efefef; }
.row, .sec { height: 11px; display: flex; align-items: center; white-space: nowrap; }
.row:nth-child(odd), .sec:nth-child(odd) { height: 12px; }
.sec { gap: 5px; font-weight: 700; padding-left: 4px; }
.sec svg { width: 7px; height: 7px; }
.s2 { padding-left: 15px; } .s3 { padding-left: 27px; }
.row { margin-left: 24px; background: #fff; border-bottom: 1px solid #efefef; }
.row .k { flex: none; width: 78px; padding-left: 3px; align-self: stretch; border-right: 1px solid #efefef; line-height: 11px; }
.row .v { flex: 1; display: flex; align-items: center; padding-left: 2px; line-height: 10px; }
.deep { margin-left: 35px; } .row.deep .k { width: 67px; }
.chip { width: 10px; height: 9px; border: 1px solid #444; margin-right: 4px; }
.grey { background: #d0d0d0; } .orange { background: #f80; } .cyan { background: #0ff; } .yellow { background: #ff0; } .magenta { background: #f0f; }
select { appearance: none; border: 0; padding: 0; margin: 0; flex: 1; height: 10px; font: inherit; line-height: 10px; color: inherit; background: linear-gradient(#e4e4e4, #e4e4e4) right / 9px 10px no-repeat; }
.row .v:has(select) { position: relative; }
.row .v:has(select)::after { content: ""; position: absolute; right: 3px; top: 3px; width: 3px; height: 3px; border: solid #777; border-width: 0 1px 1px 0; transform: rotate(45deg); pointer-events: none; }

/* document view */
.doctabs { display: flex; justify-content: space-between; height: 12px; padding: 1px 3px 0 4px; border: 1px solid #ccc; }
.doc { height: 10px; gap: 6px; padding: 0 2px 0 18px; background: #dc7d2a; color: #fff; font-weight: 600; clip-path: polygon(9px 0, 100% 0, 100% 100%, 0 100%); }
.x { width: 7px; height: 7px; line-height: 6px; background: #c94a4a; text-align: center; }
.more { background: #b8b8b8; width: 8px; height: 9px; }
.more svg { width: 8px; height: 8px; }
.viewport { flex: 1; min-height: 0; padding: 2px 2px 4px; border: solid #ccc; border-width: 0 1px 1px; display: flex; }
.scene { flex: 1; width: 100%; height: 100%; min-width: 0; contain: size; }
.axis { font: 12px "Liberation Sans", sans-serif; }
.output { margin-top: 1px; margin-bottom: 12px; }
.log { display: flex; height: 62px; margin-top: 1px; padding: 1px 1px 1px 3px; border: 1px solid #bbb; }
.log ul { flex: 1; list-style: none; font: 8px/9px "Liberation Sans", Arial, sans-serif; }
.log .vbar span { width: 9px; height: 10px; background: #cdcdcd; }
.log .vbar svg:first-child { margin-bottom: auto; }
.outtabs { display: flex; height: 12px; }
.outtabs button { font-weight: 600; height: 11px; }
.arr { width: 10px; justify-content: center; }
.arr svg { width: 8px; height: 8px; }
.outtabs .on { margin-left: 3px; padding: 0 5px 0 16px; background: #dc7d2a; color: #fff; clip-path: polygon(0 0, 100% 0, 100% 100%, 10px 100%); }
.outtabs .info { padding: 0 6px 0 8px; border: 1px solid #aaa; border-top: 0; border-radius: 0 0 2px 5px; }
.outtabs .end { margin-left: auto; }

/* clash pane */
.clash { background: #efefef; padding-left: 1px; margin-bottom: 12px; overflow: hidden; }
.clash .bar { margin-left: -1px; }
.clash > .tools { background: #fff; padding: 4px 3px 2px; height: 16px; }
.grid { border: 1px solid #8f8f8f; border-right: 0; background: #fff; height: 193px; display: flex; flex-direction: column; }
.clip { flex: 1; overflow: hidden; contain: size; }
table { border-collapse: collapse; table-layout: fixed; width: 348px; }
.c0 { width: 18px; } .c1 { width: 54px; } .c3 { width: 60px; } .c4 { width: 54px; }
th, td { height: 12px; padding: 0 4px 0 3px; font-weight: 400; text-align: center; white-space: nowrap; overflow: hidden; line-height: 10px; border: solid #efefef; border-width: 0 1px 1px 0; }
tbody tr:nth-child(even) td { height: 11px; }
th { height: 14px; }
td:first-child, th:first-child, th:last-child { text-align: left; }
th:last-child { padding-left: 7px; }
td:nth-child(5), td:nth-child(6), th:nth-child(5), th:nth-child(6) { text-align: right; padding-left: 0; }
.sorted { background: linear-gradient(#bbb, #bbb) center top / 4px 1px no-repeat; }
tr.sel { background: #cce5fb; }
td.focus { outline: 1px solid #888; outline-offset: -1px; }
.hbar { height: 9px; display: flex; background: #f0f0f0; gap: 2px; }
.hbar svg { width: 9px; height: 9px; }
.hbar span { flex: 1; background: #cdcdcd; margin-right: 5px; }
.run { padding-left: 172px; }
.run button { width: 100%; height: 11px; padding-left: 28px; justify-content: center; background: #cce5fb; font-weight: 600; }
.sheet.wide { display: flex; flex-direction: column; }
.wide .row .k { width: 150px; }
.wide .row, .wide .sec { flex: none; }
.wide .row { margin-left: 22px; }
.wide .s1 { padding-left: 2px; gap: 4px; }
.wide .s2 { padding-left: 14px; gap: 4px; }
.rest { flex: 1; background: #fff; margin-left: 22px; }
.rest span { display: block; width: 150px; height: 100%; border-right: 1px solid #efefef; }
.slide input { appearance: none; flex: none; width: 144px; height: 8px; margin: 0 0 0 9px; background: linear-gradient(#ddd, #ddd) center / 100% 3px no-repeat; }
.slide input::-webkit-slider-thumb { appearance: none; width: 5px; height: 7px; background: #0a78d7; border-radius: 0 0 2px 2px; }
.clash .note { margin: 2px 0 0; border-right: 0; }

/* annotations */
.callout { position: absolute; }
.callout svg { filter: drop-shadow(1px 2px 2px rgba(0, 0, 0, .55)); }
.callout p { position: absolute; top: 0; font: 29px/52px "Liberation Sans", Arial, sans-serif; color: #fff; white-space: nowrap; }
.one { left: 135px; top: 66px; } .one svg, .three svg { width: 370px; height: 86px; } .one p { left: 57px; }
.two { left: 65px; top: 163px; } .two svg { width: 380px; height: 62px; } .two p, .three p { line-height: 56px; left: 57px; }
.three { left: 145px; top: 278px; } .three p { left: 84px; color: #4a4a2c; }

.status { height: 10px; margin-top: -10px; display: flex; justify-content: flex-end; color: #888; line-height: 10px; position: relative; }
.status span { border-left: 1px solid #ddd; padding-left: 2px; }
.s-sel { width: 184px; } .s-fmt { width: 142px; }
```
